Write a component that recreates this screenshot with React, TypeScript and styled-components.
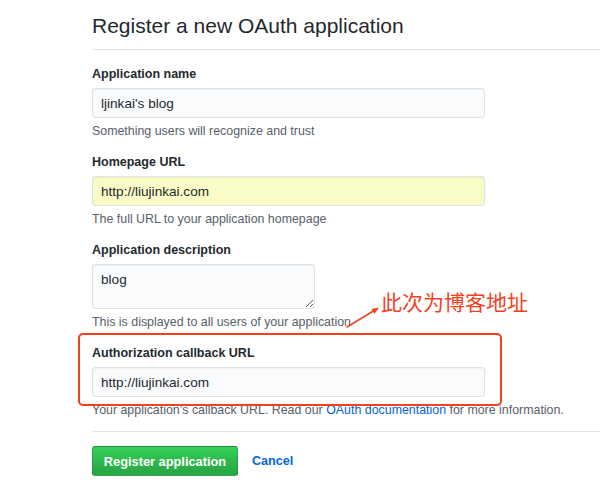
import React from "react";
import styled, { createGlobalStyle } from "styled-components";

const Global = createGlobalStyle`
  html, body { margin: 0; padding: 0; background: #fff; }
  body { font-family: "Liberation Sans", Arial, sans-serif; color: #24292e; }
  * { box-sizing: border-box; }
`;

const Page = styled.div`
  position: relative;
  width: 600px;
  height: 494px;
  overflow: hidden;
  padding-left: 92px;
`;

const Header = styled.div`
  padding-top: 13px;
  padding-bottom: 10px;
  border-bottom: 1px solid #e1e4e8;
  width: 600px;
`;

const Title = styled.h2`
  margin: 0;
  font-size: 21px;
  line-height: 26px;
  font-weight: 400;
  color: #24292e;
`;

const Form = styled.form`
  padding-top: 14px;
`;

const Group = styled.div<{ $highlight?: boolean }>`
  position: relative;
  margin-bottom: 13px;
  &::after {
    content: "";
    display: ${(p) => (p.$highlight ? "block" : "none")};
    position: absolute;
    left: -14px;
    top: -10px;
    width: 420px;
    height: 69px;
    border: 2px solid #f4401f;
    border-radius: 5px;
    pointer-events: none;
  }
`;

const Label = styled.label`
  display: block;
  font-size: 12.5px;
  font-weight: 700;
  line-height: 20px;
  margin-bottom: 4px;
  color: #24292e;
`;

const Input = styled.input<{ $autofill?: boolean }>`
  display: block;
  width: 393px;
  height: 30px;
  padding: 0 8px;
  font-family: "Liberation Sans", Arial, sans-serif;
  font-size: 13.6px;
  color: #24292e;
  background: ${(p) => (p.$autofill ? "#fafcc8" : "#fafbfc")};
  border: 1px solid #dfe2e5;
  border-radius: 3px;
  box-shadow: inset 0 1px 2px rgba(27, 31, 35, 0.06);
  outline: none;
`;

const TextArea = styled.textarea`
  display: block;
  width: 223px;
  height: 45px;
  padding: 6px 8px;
  font-family: "Liberation Sans", Arial, sans-serif;
  font-size: 13.6px;
  line-height: 18px;
  color: #24292e;
  background: #fafbfc;
  border: 1px solid #dfe2e5;
  border-radius: 3px;
  box-shadow: inset 0 1px 2px rgba(27, 31, 35, 0.06);
  resize: vertical;
  outline: none;
`;

const Note = styled.p`
  margin: 5px 0 0;
  font-size: 12.4px;
  line-height: 16px;
  color: #586069;
  white-space: nowrap;
`;

const Link = styled.a`
  color: #0366d6;
  text-decoration: none;
`;

const Actions = styled.div`
  width: 600px;
  border-top: 1px solid #e1e4e8;
  padding-top: 14px;
  display: flex;
  align-items: center;
  gap: 14px;
`;

const Button = styled.button`
  height: 30px;
  width: 146px;
  padding: 0;
  font-family: "Liberation Sans", Arial, sans-serif;
  font-size: 12.8px;
  font-weight: 700;
  color: #fff;
  background: linear-gradient(-180deg, #34d058 0%, #28a745 90%);
  border: 1px solid rgba(27, 31, 35, 0.2);
  border-radius: 3px;
`;

const Cancel = styled.a`
  font-size: 12.6px;
  font-weight: 700;
  color: #0366d6;
  text-decoration: none;
`;

const Annotation = styled.div`
  position: absolute;
  left: 381px;
  top: 291px;
  font-family: "Noto Sans CJK SC", sans-serif;
  font-size: 21px;
  line-height: 21px;
  color: #f4401f;
  white-space: nowrap;
`;

const Arrow = styled.svg`
  position: absolute;
  left: 344px;
  top: 304px;
`;

export default function App() {
  return (
    <Page>
      <Global />
      <Header>
        <Title>Register a new OAuth application</Title>
      </Header>
      <Form onSubmit={(e) => e.preventDefault()}>
        <Group>
          <Label>Application name</Label>
          <Input readOnly value="ljinkai's blog" />
          <Note>Something users will recognize and trust</Note>
        </Group>
        <Group>
          <Label>Homepage URL</Label>
          <Input readOnly $autofill value="http://liujinkai.com" />
          <Note>The full URL to your application homepage</Note>
        </Group>
        <Group>
          <Label>Application description</Label>
          <TextArea readOnly value="blog" />
          <Note>This is displayed to all users of your application</Note>
        </Group>
        <Group $highlight>
          <Label>Authorization callback URL</Label>
          <Input readOnly value="http://liujinkai.com" />
          <Note>
            Your application’s callback URL. Read our <Link href="#">OAuth documentation</Link> for more information.
          </Note>
        </Group>
        <Actions>
          <Button type="button">Register application</Button>
          <Cancel href="#">Cancel</Cancel>
        </Actions>
      </Form>
      <Arrow width="38" height="26" viewBox="0 0 38 26">
        <line x1="3" y1="23" x2="31" y2="6" stroke="#f4401f" strokeWidth="1.6" strokeLinecap="round" />
        <polygon points="35,3.5 27.5,5 30.5,9.8" fill="#f4401f" />
      </Arrow>
      <Annotation>此次为博客地址</Annotation>
    </Page>
  );
}
